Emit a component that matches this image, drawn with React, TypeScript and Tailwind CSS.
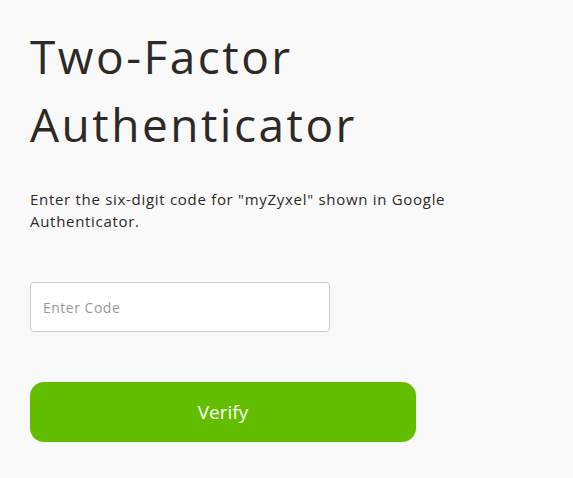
export default function App() {
  return (
    <div className="min-h-screen bg-[#f9f9f9] px-[30px] pt-[22px] font-['Open_Sans',_'Noto_Sans',_sans-serif] text-[#2d2926]">
      <h1 className="text-[46px] font-normal leading-[68px] tracking-[2.5px]">
        Two-Factor
        <br />
        Authenticator
      </h1>

      <p className="mt-[30px] text-[15px] leading-[22px] tracking-[0.7px]">
        Enter the six-digit code for "myZyxel" shown in Google
        <br />
        Authenticator.
      </p>

      <input
        type="text"
        placeholder="Enter Code"
        className="mt-[50px] block h-[50px] w-[300px] rounded-[4px] border border-[#cccccc] bg-white px-3 text-[14px] tracking-[0.5px] outline-none placeholder:text-[#999999]"
      />

      <button className="mt-[50px] block h-[60px] w-[386px] rounded-[14px] bg-[#64be00] text-[19px] text-white">
        Verify
      </button>
    </div>
  )
}
